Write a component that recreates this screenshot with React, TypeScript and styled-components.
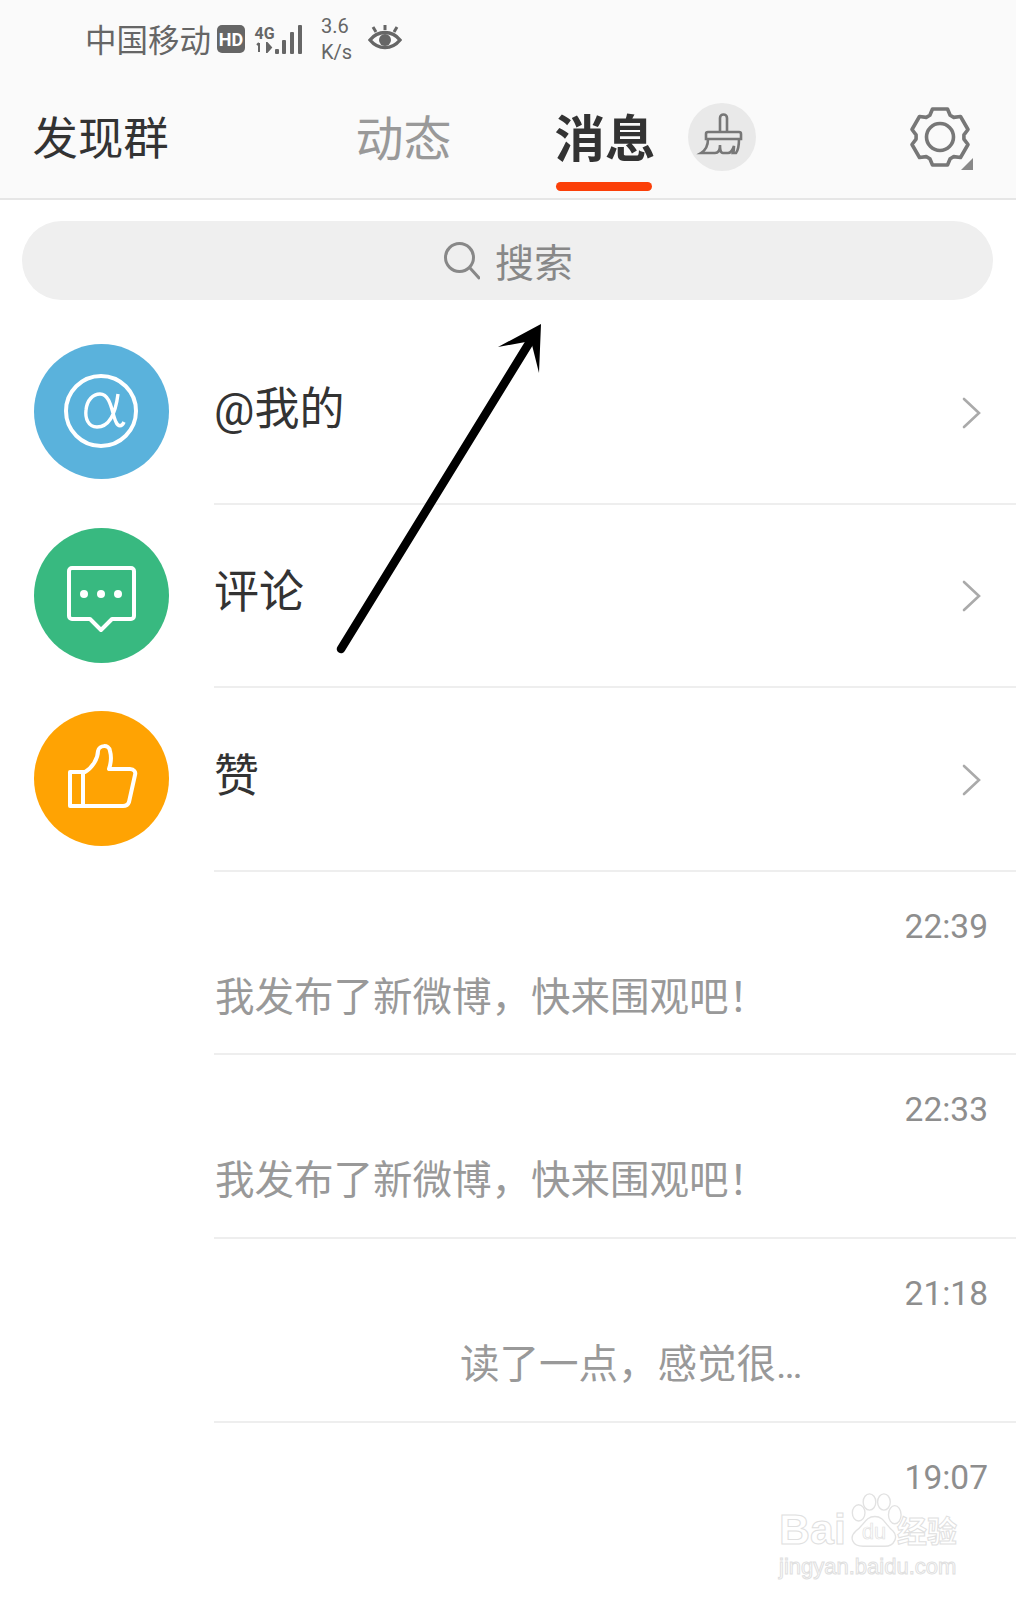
import React from 'react'
import styled, { createGlobalStyle } from 'styled-components'

const GlobalStyle = createGlobalStyle`
  html, body {
    margin: 0;
    padding: 0;
    background: #fff;
  }
  * {
    box-sizing: border-box;
  }
`

const MESSAGES = [
  { time: '22:39', text: '我发布了新微博，快来围观吧！' },
  { time: '22:33', text: '我发布了新微博，快来围观吧！' },
  { time: '21:18', text: '读了一点，感觉很…', centered: true },
  { time: '19:07', text: '' },
]

// six flat teeth, one pointing straight up
const gearPath = (cx: number, cy: number, outer: number, inner: number) => {
  const point = (deg: number, r: number) => {
    const rad = ((deg - 90) * Math.PI) / 180
    return `${(cx + r * Math.cos(rad)).toFixed(2)} ${(cy + r * Math.sin(rad)).toFixed(2)}`
  }
  const parts: string[] = []
  for (let i = 0; i < 6; i++) {
    const a = i * 60
    parts.push(point(a - 25, inner), point(a - 15, outer), point(a + 15, outer), point(a + 25, inner))
  }
  return `M${parts.join('L')}Z`
}

const App: React.FC = () => {
  return (
    <Page>
      <GlobalStyle />
      <Top>
        <StatusBar>
          <Carrier>中国移动</Carrier>
          <HdBadge>HD</HdBadge>
          <NetType>
            <NetLabel>4G</NetLabel>
            <svg width="17" height="11" viewBox="0 0 17 11">
              <path d="M3 1v9M1 3l2-2M11 1v9l4-4.5z" stroke="#666" strokeWidth="2" fill="#666" />
            </svg>
          </NetType>
          <svg width="30" height="30" viewBox="0 0 30 30">
            <rect x="2" y="25" width="4" height="5" rx="1" fill="#666" />
            <rect x="9" y="16" width="4" height="14" rx="1" fill="#666" />
            <rect x="17" y="8" width="4" height="22" rx="1" fill="#666" />
            <rect x="25" y="1" width="4" height="29" rx="1" fill="#666" />
          </svg>
          <Speed>
            <span>3.6</span>
            <span>K/s</span>
          </Speed>
          <svg width="34" height="30" viewBox="0 0 34 30">
            <path d="M2 16c8-10 22-10 30 0-8 10-22 10-30 0z" fill="none" stroke="#666" strokeWidth="3.4" />
            <circle cx="17" cy="16" r="6" fill="#666" />
            <path d="M17 1v5M5 3l3 5M29 3l-3 5" stroke="#666" strokeWidth="3" />
          </svg>
        </StatusBar>
        <Header>
          <Title>发现群</Title>
          <Tab>动态</Tab>
          <ActiveTab>消息</ActiveTab>
          <BroomButton>
            <svg width="68" height="68" viewBox="0 0 68 68" fill="none" stroke="#777" strokeWidth="2.6">
              <path d="M32 29V15a3.5 3.5 0 0 1 7 0v14" />
              <path d="M20 29h31a2 2 0 0 1 2 2v5H18v-5a2 2 0 0 1 2-2z" />
              <path d="M20 36c0 7-2 11-7 14h14c3 0 5-3 5-8 0 4 0 8 3 8h5c3 0 5-4 6-7 0 3 0 5-1 7h3c3-4 3-9 3-14" />
            </svg>
          </BroomButton>
          <GearButton>
            <svg width="72" height="72" viewBox="0 0 72 72" fill="none" stroke="#777" strokeWidth="3.6" strokeLinejoin="round">
              <path d={gearPath(36, 36, 29, 24)} />
              <circle cx="36" cy="36" r="13.5" />
            </svg>
            <GearCorner />
          </GearButton>
        </Header>
      </Top>

      <SearchBar>
        <svg width="36" height="38" viewBox="0 0 36 38" fill="none" stroke="#888" strokeWidth="3">
          <circle cx="15.5" cy="15.5" r="14" />
          <path d="M26 26l9 10" strokeLinecap="round" />
        </svg>
        <SearchLabel>搜索</SearchLabel>
      </SearchBar>

      <List>
        <Row>
          <Avatar $color="#5ab2dc">
            <svg width="135" height="135" viewBox="0 0 135 135" fill="none" stroke="#fff" strokeWidth="4">
              <circle cx="67" cy="67" r="35" />
              <path d="M84 50c-2 16-7 33-21 33-9 0-12-9-11-17 1-10 7-16 14-16 11 0 12 20 16 28 2 5 6 5 8 0" strokeWidth="3.4" />
            </svg>
          </Avatar>
          <RowBody>
            <RowLabel>@我的</RowLabel>
            <Chevron />
          </RowBody>
        </Row>
        <Row>
          <Avatar $color="#38b980">
            <svg width="135" height="135" viewBox="0 0 135 135" fill="none" stroke="#fff" strokeWidth="4" strokeLinejoin="round">
              <path d="M38 40h59a3 3 0 0 1 3 3v45a3 3 0 0 1-3 3H78L67 102 56 91H38a3 3 0 0 1-3-3V43a3 3 0 0 1 3-3z" />
              <circle cx="50" cy="66" r="4" fill="#fff" stroke="none" />
              <circle cx="67" cy="66" r="4" fill="#fff" stroke="none" />
              <circle cx="84" cy="66" r="4" fill="#fff" stroke="none" />
            </svg>
          </Avatar>
          <RowBody>
            <RowLabel>评论</RowLabel>
            <Chevron />
          </RowBody>
        </Row>
        <Row>
          <Avatar $color="#ffa303">
            <svg width="135" height="135" viewBox="0 0 135 135" fill="none" stroke="#fff" strokeWidth="4" strokeLinejoin="round">
              <path d="M36 61h15c7-4 13-13 13-21 1-6 11-7 12 0 2 7 1 12-1 18h21c4 0 6 3 5 6l-6 27c-1 3-3 4-6 4H36z" />
              <path d="M49 61v36" />
            </svg>
          </Avatar>
          <RowBody>
            <RowLabel>赞</RowLabel>
            <Chevron />
          </RowBody>
        </Row>
        {MESSAGES.map((message) => (
          <MessageRow key={message.time}>
            <MessageTime>{message.time}</MessageTime>
            <MessageText $centered={message.centered}>{message.text}</MessageText>
          </MessageRow>
        ))}
      </List>

      <Arrow width="220" height="340" viewBox="0 0 220 340">
        <path d="M11 329L201 20" stroke="#000" strokeWidth="8.5" strokeLinecap="round" fill="none" />
        <path d="M211 4L168 27L201 21L209 53z" fill="#000" />
      </Arrow>

      <Watermark>
        <LogoLine>
          <LogoBai>Bai</LogoBai>
          <svg width="56" height="58" viewBox="0 0 62 62" fill="#fff" stroke="#e2e2e2" strokeWidth="1.5">
            <ellipse cx="14" cy="22" rx="7" ry="9" />
            <ellipse cx="26" cy="10" rx="7" ry="9" />
            <ellipse cx="42" cy="10" rx="7" ry="9" />
            <ellipse cx="54" cy="24" rx="7" ry="10" />
            <path d="M32 26c10 0 12 10 20 16 6 6 2 17-9 17H19C7 59 3 49 11 42c9-6 10-16 21-16z" />
            <LogoDu x="31" y="51">du</LogoDu>
          </svg>
          <LogoCn>经验</LogoCn>
        </LogoLine>
        <LogoUrl>jingyan.baidu.com</LogoUrl>
      </Watermark>
    </Page>
  )
}

const Chevron: React.FC = () => (
  <ChevronSlot>
    <svg width="19" height="32" viewBox="0 0 19 32" fill="none" stroke="#aaa" strokeWidth="2.6" strokeLinecap="round">
      <path d="M2 2l15 14L2 30" />
    </svg>
  </ChevronSlot>
)

const CJK = `Roboto, "Noto Sans CJK SC", sans-serif`

const Page = styled.div`
  position: relative;
  width: 1016px;
  height: 1600px;
  overflow: hidden;
  background: #fff;
  font-family: ${CJK};
`
const Top = styled.div`
  height: 200px;
  background: #fafafa;
  border-bottom: 2px solid #e6e6e6;
`
const StatusBar = styled.div`
  height: 78px;
  padding-left: 85px;
  display: flex;
  align-items: center;
  color: #666;
`
const Carrier = styled.span`
  margin-top: 5px;
  font-size: 31.5px;
  line-height: 1;
`
const HdBadge = styled.span`
  width: 28px;
  height: 28px;
  margin-left: 6px;
  border-radius: 5px;
  background: #666;
  color: #fff;
  font-size: 18px;
  font-weight: 700;
  display: flex;
  align-items: center;
  justify-content: center;
`
const NetType = styled.span`
  width: 17px;
  margin-left: 11px;
  display: flex;
  flex-direction: column;
  align-items: center;
`
const NetLabel = styled.span`
  font-size: 16px;
  line-height: 17px;
  font-weight: 700;
`
const Speed = styled.span`
  margin-left: 18px;
  width: 47px;
  display: flex;
  flex-direction: column;
  font-size: 20px;
  line-height: 26px;
`
const Header = styled.div`
  height: 120px;
  display: flex;
  align-items: flex-start;
`
const Title = styled.div`
  margin-left: 32.5px;
  margin-top: 29px;
  font-size: 45.4px;
  line-height: 66px;
  color: #333;
`
const Tab = styled.div`
  margin-left: 186.8px;
  margin-top: 29px;
  font-size: 48px;
  line-height: 66px;
  color: #999;
`
const ActiveTab = styled.div`
  position: relative;
  margin-left: 103px;
  margin-top: 29px;
  font-size: 50.5px;
  line-height: 66px;
  font-weight: 700;
  color: #333;
  &::after {
    content: '';
    position: absolute;
    left: 1.5px;
    right: 3.5px;
    top: 75px;
    height: 8.5px;
    border-radius: 5px;
    background: #fb3f08;
  }
`
const BroomButton = styled.div`
  width: 68px;
  height: 68px;
  margin-left: 32.5px;
  margin-top: 25px;
  border-radius: 50%;
  background: #e9e9e9;
`
const GearButton = styled.div`
  position: relative;
  margin-left: auto;
  margin-right: 40px;
  margin-top: 23px;
  width: 72px;
  height: 72px;
`
const GearCorner = styled.span`
  position: absolute;
  right: 3px;
  bottom: 3px;
  width: 12px;
  height: 12px;
  background: #888;
  clip-path: polygon(100% 0, 100% 100%, 0 100%);
`
const SearchBar = styled.div`
  height: 79px;
  margin: 21px 23px 0 22px;
  border-radius: 40px;
  background: #efefef;
  display: flex;
  align-items: center;
  justify-content: center;
  gap: 15px;
  padding-left: 2px;
`
const SearchLabel = styled.span`
  margin-bottom: 2px;
  font-size: 39px;
  color: #888;
`
const List = styled.div`
  margin-top: 21px;
`
const Row = styled.div`
  height: 183.6px;
  display: flex;
  align-items: stretch;
`
const Avatar = styled.div<{ $color: string }>`
  flex: none;
  width: 135px;
  height: 135px;
  margin: 0 45px 2px 34px;
  align-self: center;
  border-radius: 50%;
  background: ${(props) => props.$color};
  svg {
    display: block;
  }
`
const RowBody = styled.div`
  flex: 1;
  display: flex;
  align-items: center;
  justify-content: space-between;
  padding-right: 35px;
  border-bottom: 2px solid #eee;
`
const RowLabel = styled.span`
  margin-bottom: 4px;
  font-size: 45px;
  line-height: 60px;
  color: #333;
`
const ChevronSlot = styled.span`
  display: flex;
  margin-top: 2px;
`
const MessageRow = styled.div`
  height: 183.6px;
  margin-left: 214px;
  padding: 33px 28px 0 0;
  display: flex;
  flex-direction: column;
  border-bottom: 2px solid #eee;
`
const MessageTime = styled.div`
  text-align: right;
  font-size: 33.5px;
  line-height: 44px;
  color: #8e8e8e;
`
const MessageText = styled.div<{ $centered?: boolean }>`
  margin-top: 21px;
  margin-left: ${(props) => (props.$centered ? '246px' : '1px')};
  font-size: 39.5px;
  line-height: 56px;
  color: #999;
  white-space: nowrap;
`
const Arrow = styled.svg`
  position: absolute;
  left: 330px;
  top: 320px;
`
const Watermark = styled.div`
  position: absolute;
  left: 779px;
  top: 1492px;
  display: flex;
  flex-direction: column;
  color: #fff;
  -webkit-text-stroke: 1px #e0e0e0;
`
const LogoLine = styled.div`
  display: flex;
  align-items: flex-end;
  height: 58px;
`
const LogoBai = styled.span`
  font-family: 'Liberation Sans', sans-serif;
  font-size: 43px;
  line-height: 42px;
  font-weight: 700;
`
const LogoDu = styled.text`
  font-family: 'Liberation Sans', sans-serif;
  font-size: 24px;
  text-anchor: middle;
  stroke-width: 0.8;
`
const LogoCn = styled.span`
  margin-left: -5px;
  font-size: 30px;
  line-height: 36px;
  font-weight: 700;
`
const LogoUrl = styled.div`
  margin-top: 4px;
  font-family: 'Liberation Sans', sans-serif;
  font-size: 22px;
  line-height: 26px;
  white-space: nowrap;
`

export default App
